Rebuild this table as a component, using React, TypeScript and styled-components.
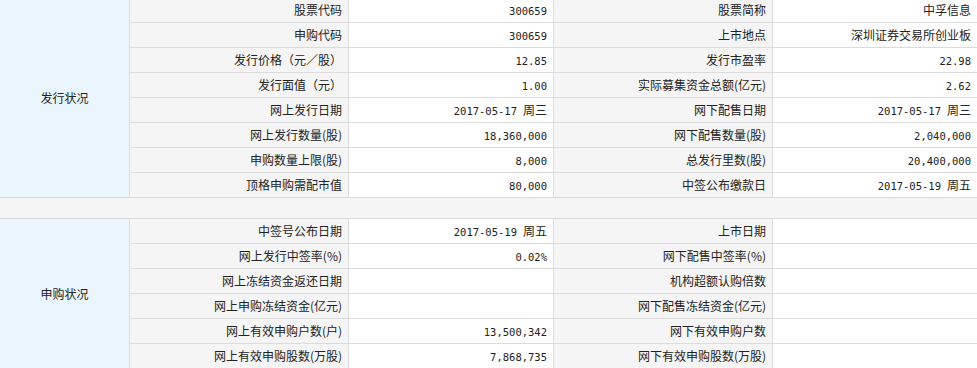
import styled, { createGlobalStyle } from 'styled-components';

type Row = [string, string, string, string];

const issueRows: Row[] = [
  ['股票代码', '300659', '股票简称', '中孚信息'],
  ['申购代码', '300659', '上市地点', '深圳证券交易所创业板'],
  ['发行价格（元／股）', '12.85', '发行市盈率', '22.98'],
  ['发行面值（元）', '1.00', '实际募集资金总额(亿元)', '2.62'],
  ['网上发行日期', '2017-05-17 周三', '网下配售日期', '2017-05-17 周三'],
  ['网上发行数量(股)', '18,360,000', '网下配售数量(股)', '2,040,000'],
  ['申购数量上限(股)', '8,000', '总发行里数(股)', '20,400,000'],
  ['顶格申购需配市值', '80,000', '中签公布缴款日', '2017-05-19 周五'],
];

const subscribeRows: Row[] = [
  ['中签号公布日期', '2017-05-19 周五', '上市日期', ''],
  ['网上发行中签率(%)', '0.02%', '网下配售中签率(%)', ''],
  ['网上冻结资金返还日期', '', '机构超额认购倍数', ''],
  ['网上申购冻结资金(亿元)', '', '网下配售冻结资金(亿元)', ''],
  ['网上有效申购户数(户)', '13,500,342', '网下有效申购户数', ''],
  ['网上有效申购股数(万股)', '7,868,735', '网下有效申购股数(万股)', ''],
];

const GlobalStyle = createGlobalStyle`
  html, body {
    margin: 0;
    padding: 0;
    background: #fff;
    overflow: hidden;
  }
  body {
    font-family: "Noto Sans CJK SC", "Liberation Sans", sans-serif;
    font-size: 12px;
    color: #222;
  }
`;

const Sheet = styled.div`
  display: grid;
  grid-template-columns: 129px 218px 204px 218px 1fr;
  grid-auto-rows: auto;
  gap: 1px;
  padding-top: 1px;
  margin-top: -3px;
  background: #dcdcdc;
`;

const GroupCell = styled.div<{ $span: number }>`
  grid-column: 1;
  grid-row: span ${({ $span }) => $span};
  display: flex;
  align-items: center;
  justify-content: center;
  background: #eaf5fe;
  padding-bottom: 1px;
`;

const Cell = styled.div`
  height: 24px;
  text-align: right;
  padding-right: 6px;
  line-height: 24px;
  white-space: nowrap;
  overflow: hidden;
`;

const LabelCell = styled(Cell)`
  background: #f5f5f5;
`;

const ValueCell = styled(Cell)`
  background: #fff;
`;

const Num = styled.span`
  font-family: "DejaVu Sans Mono", "Noto Sans CJK SC", monospace;
  font-size: 10.5px;
`;

const Day = styled.span`
  margin-left: 6px;
`;

const Spacer = styled.div`
  grid-column: 1 / -1;
  height: 20px;
  background: #f5f5f5;
`;

const Value = ({ text }: { text: string }) => {
  if (!text) return <ValueCell />;
  const [num, day] = text.split(' ');
  if (!/^[\d.,%-]+$/.test(num)) return <ValueCell>{text}</ValueCell>;
  return (
    <ValueCell>
      <Num>{num}</Num>
      {day && <Day>{day}</Day>}
    </ValueCell>
  );
};

const Cells = ({ row }: { row: Row }) => (
  <>
    <LabelCell>{row[0]}</LabelCell>
    <Value text={row[1]} />
    <LabelCell>{row[2]}</LabelCell>
    <Value text={row[3]} />
  </>
);

const Group = ({ title, rows }: { title: string; rows: Row[] }) => (
  <>
    <GroupCell $span={rows.length}>{title}</GroupCell>
    {rows.map((r, i) => (
      <Cells key={i} row={r} />
    ))}
  </>
);

const App = () => (
  <>
    <GlobalStyle />
    <Sheet>
      <Group title="发行状况" rows={issueRows} />
      <Spacer />
      <Group title="申购状况" rows={subscribeRows} />
    </Sheet>
  </>
);

export default App;
